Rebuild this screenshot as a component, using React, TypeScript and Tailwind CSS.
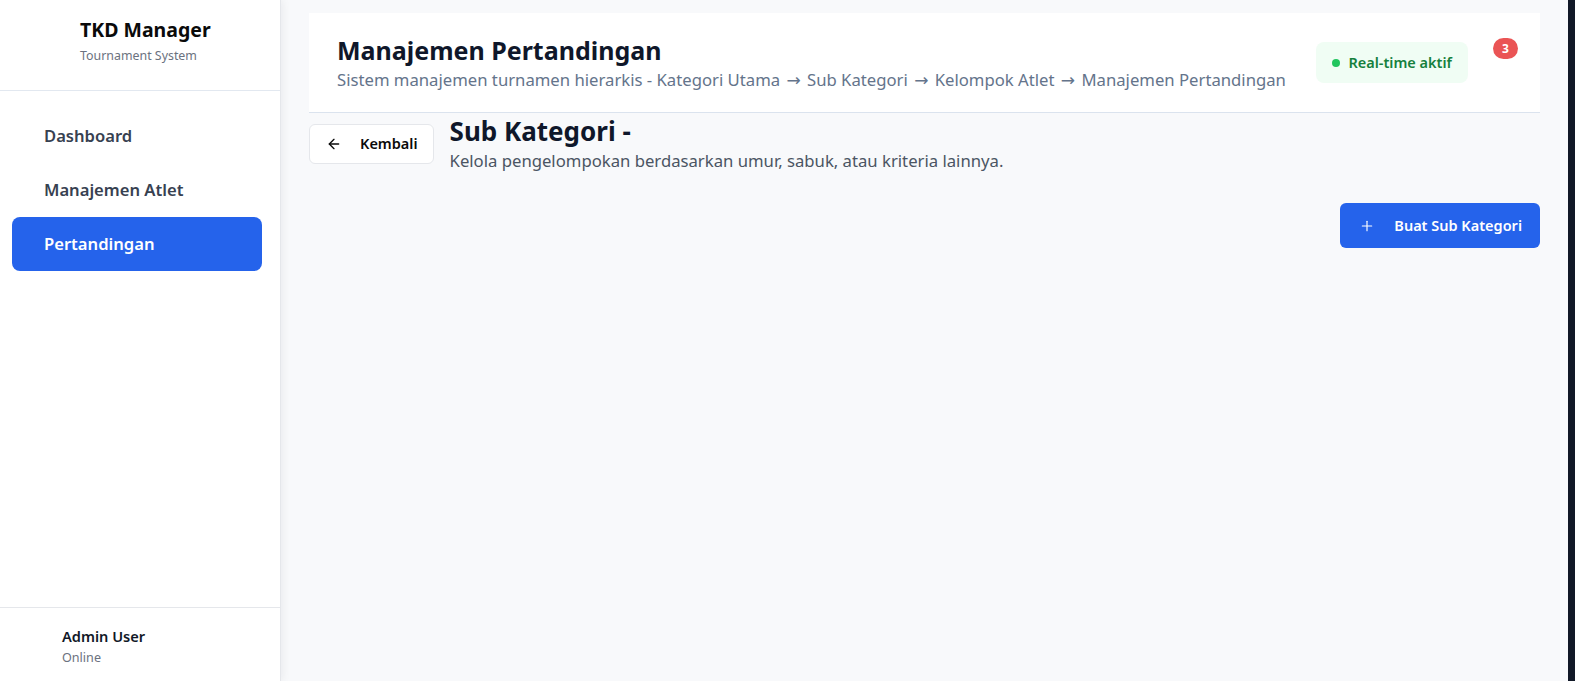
import React from "react";
import { ArrowLeft, Plus } from "lucide-react";

const Arrow = () => (
  <span style={{ fontFamily: '"DejaVu Sans", sans-serif' }} className="mx-[2px] text-[17px] leading-none">
    →
  </span>
);

export default function App() {
  return (
    <div
      className="flex h-[681px] w-full overflow-hidden bg-[#f8f9fb]"
      style={{ fontFamily: '"Noto Sans", "Open Sans", sans-serif' }}
    >
      <aside className="relative z-10 flex w-[281px] shrink-0 flex-col border-r border-[#e5e7eb] bg-white shadow-[2px_0_8px_rgba(15,23,42,0.06)]">
        <div className="h-[91px] border-b border-[#e2e8f0] pl-[80px] pt-[16px]">
          <div className="text-[19.5px] font-bold leading-[27px] text-[#0a0a0a]">TKD Manager</div>
          <div className="mt-[5px] text-[12.4px] leading-[16px] text-[#6b7280]">Tournament System</div>
        </div>
        <nav className="flex flex-1 flex-col pl-[12px] pr-[18px] pt-[18px]">
          <div className="flex h-[54px] items-center rounded-lg px-8 text-[16.6px] font-semibold text-[#374151]">
            Dashboard
          </div>
          <div className="flex h-[54px] items-center rounded-lg px-8 text-[16.6px] font-semibold text-[#374151]">
            Manajemen Atlet
          </div>
          <div className="flex h-[54px] items-center rounded-lg bg-[#2563eb] px-8 text-[16.6px] font-semibold text-white">
            Pertandingan
          </div>
        </nav>
        <div className="h-[74px] border-t border-[#e5e7eb] pl-[62px] pt-[18px]">
          <div className="text-[14.6px] font-semibold leading-[20px] text-[#111827]">Admin User</div>
          <div className="mt-[3px] text-[12.6px] leading-[18px] text-[#6b7280]">Online</div>
        </div>
      </aside>

      <main className="flex flex-1 flex-col px-[28px] pt-[13px]">
        <header className="flex h-[100px] items-center justify-between border-b border-[#dbe3ee] bg-white pl-[28px] pr-[22px]">
          <div>
            <h1 className="text-[25px] font-bold leading-[32px] text-[#0f172a]">Manajemen Pertandingan</h1>
            <p className="mt-[2px] text-[16.7px] leading-[24px] text-[#64748b]">
              Sistem manajemen turnamen hierarkis - Kategori Utama <Arrow /> Sub Kategori <Arrow /> Kelompok Atlet <Arrow /> Manajemen Pertandingan
            </p>
          </div>
          <div className="flex items-start gap-[25px]">
            <div className="flex h-[41px] items-center gap-2 rounded-lg bg-[#f0fdf4] px-4 text-[14.5px] font-semibold text-[#15803d]">
              <span className="h-2 w-2 rounded-full bg-[#22c55e]" />
              Real-time aktif
            </div>
            <div className="mt-[-4px] flex h-[21px] min-w-[25px] items-center justify-center rounded-full bg-[#ea5455] px-[7px] text-[12px] font-bold text-white">
              3
            </div>
          </div>
        </header>

        <div className="mt-[2px] flex h-[58px] items-center gap-4">
          <button className="flex h-[40px] items-center gap-[18px] rounded-md border border-[#e5e7eb] bg-white pl-4 pr-[15px] text-[14.5px] font-semibold text-[#0a0a0a]">
            <ArrowLeft size={16} strokeWidth={2} />
            Kembali
          </button>
          <div>
            <h2 className="text-[26px] font-bold leading-[32px] text-[#0f172a]">Sub Kategori -</h2>
            <p className="mt-[2px] text-[16.7px] leading-[24px] text-[#4b5563]">
              Kelola pengelompokan berdasarkan umur, sabuk, atau kriteria lainnya.
            </p>
          </div>
        </div>

        <div className="mt-[30px] flex justify-end">
          <button className="flex h-[45px] items-center gap-[19px] rounded-md bg-[#2563eb] pl-[19px] pr-[18px] text-[14.5px] font-semibold text-white">
            <Plus size={16} strokeWidth={1.75} />
            Buat Sub Kategori
          </button>
        </div>
      </main>

      <div className="w-[7px] shrink-0 bg-[#111827]" />
    </div>
  );
}
